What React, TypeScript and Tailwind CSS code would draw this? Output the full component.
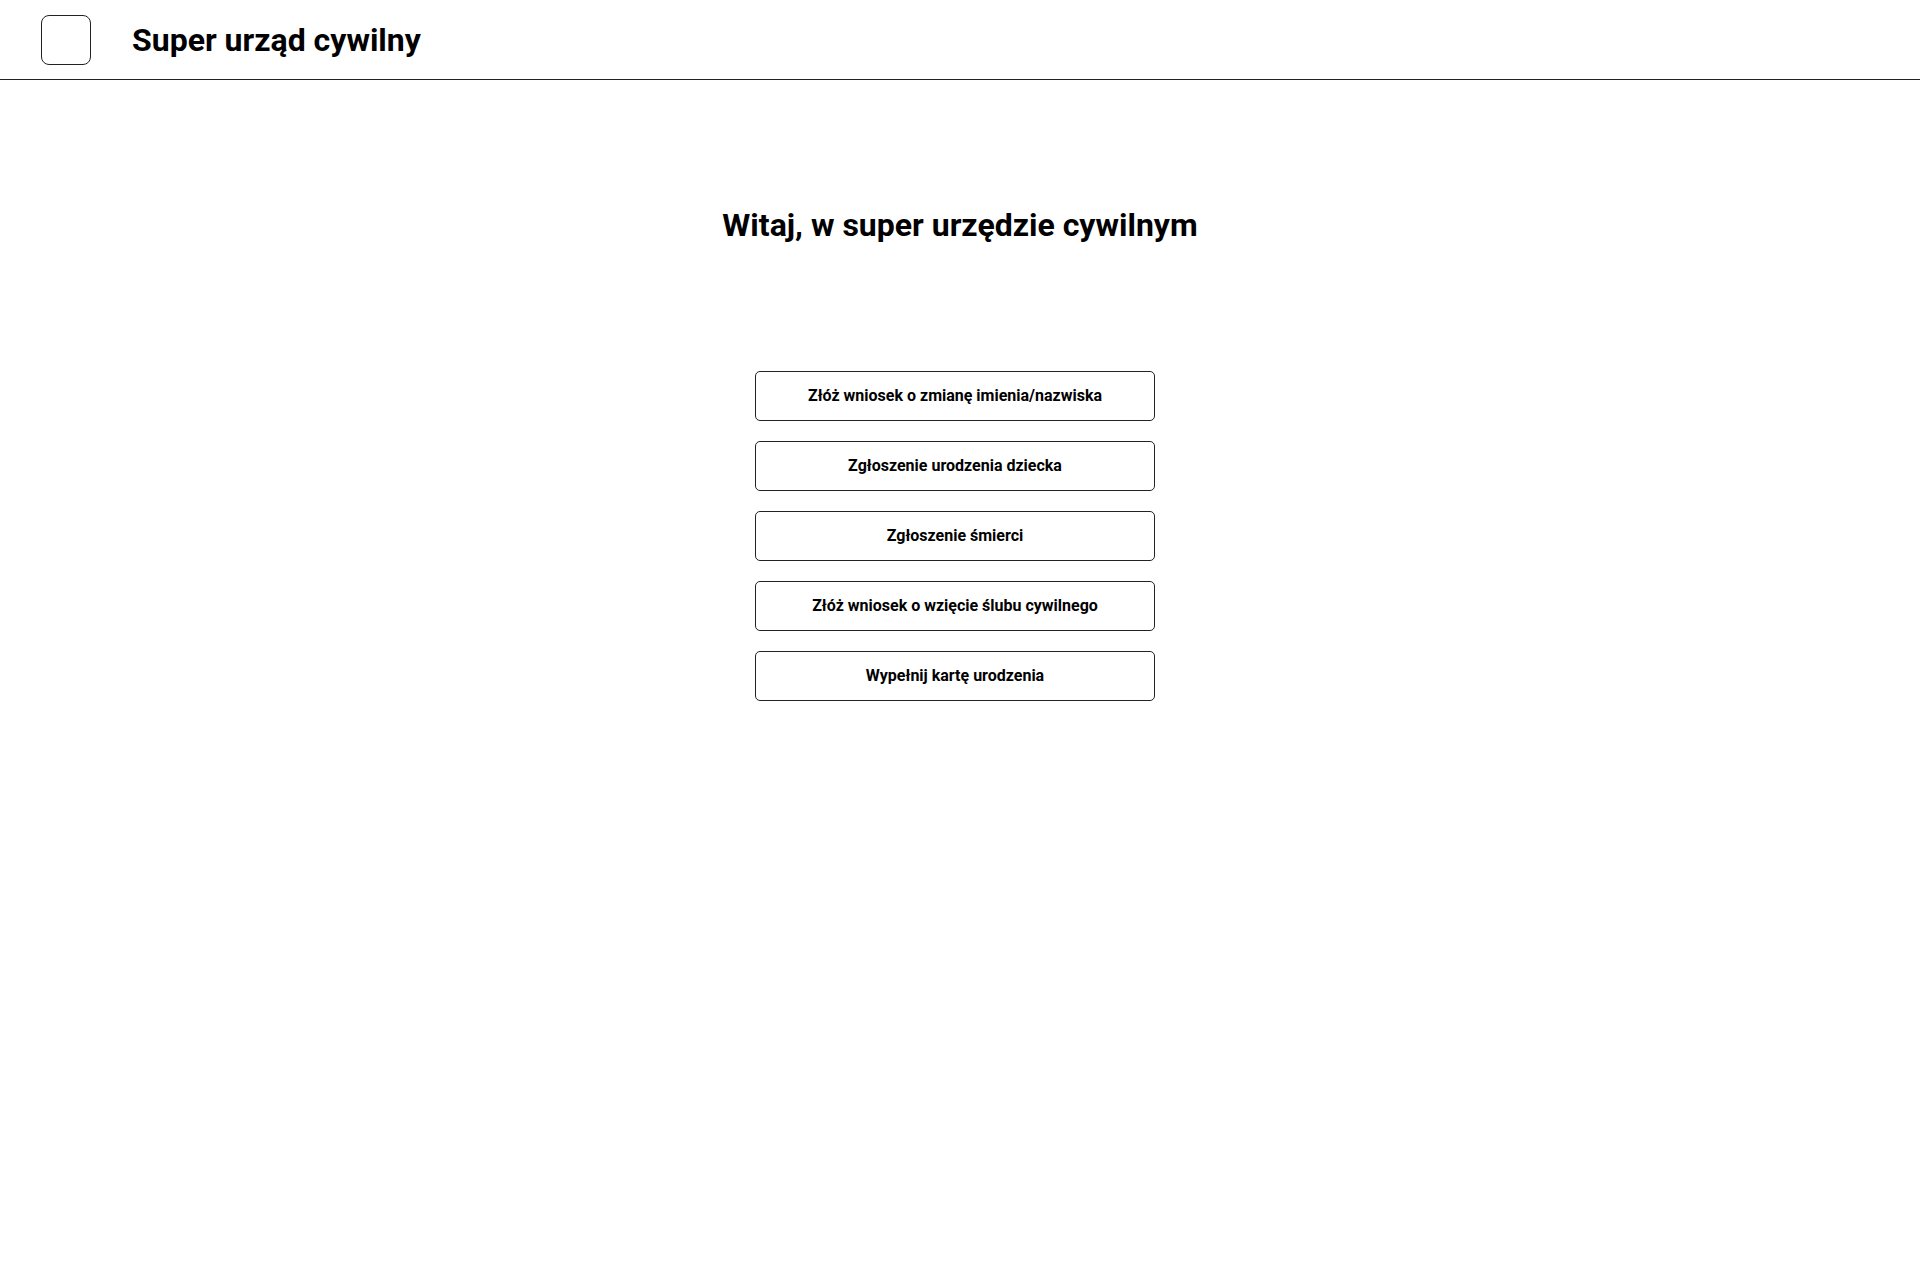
import React from "react";

const items = [
  "Złóż wniosek o zmianę imienia/nazwiska",
  "Zgłoszenie urodzenia dziecka",
  "Zgłoszenie śmierci",
  "Złóż wniosek o wzięcie ślubu cywilnego",
  "Wypełnij kartę urodzenia",
];

export default function App() {
  return (
    <div className="min-h-[1277px] bg-white text-black" style={{ fontFamily: "Roboto, 'Noto Sans', sans-serif" }}>
      <header className="h-[80px] border-b border-[#222] flex items-center pl-[41px] pt-px">
        <div className="w-[50px] h-[50px] rounded-[8px] border border-[#222]" />
        <h1 className="ml-[41px] text-[32px] leading-[36px] font-bold">Super urząd cywilny</h1>
      </header>
      <main className="flex flex-col items-center pt-[121px]">
        <h2 className="text-[32px] leading-[48px] font-bold">Witaj, w super urzędzie cywilnym</h2>
        <div className="mt-[122px] mr-[10px] flex flex-col gap-[20px]">
          {items.map((t) => (
            <button
              key={t}
              className="w-[400px] h-[50px] rounded-[5px] border border-[#222] bg-white text-[16px] font-bold flex items-center justify-center"
            >
              {t}
            </button>
          ))}
        </div>
      </main>
    </div>
  );
}
